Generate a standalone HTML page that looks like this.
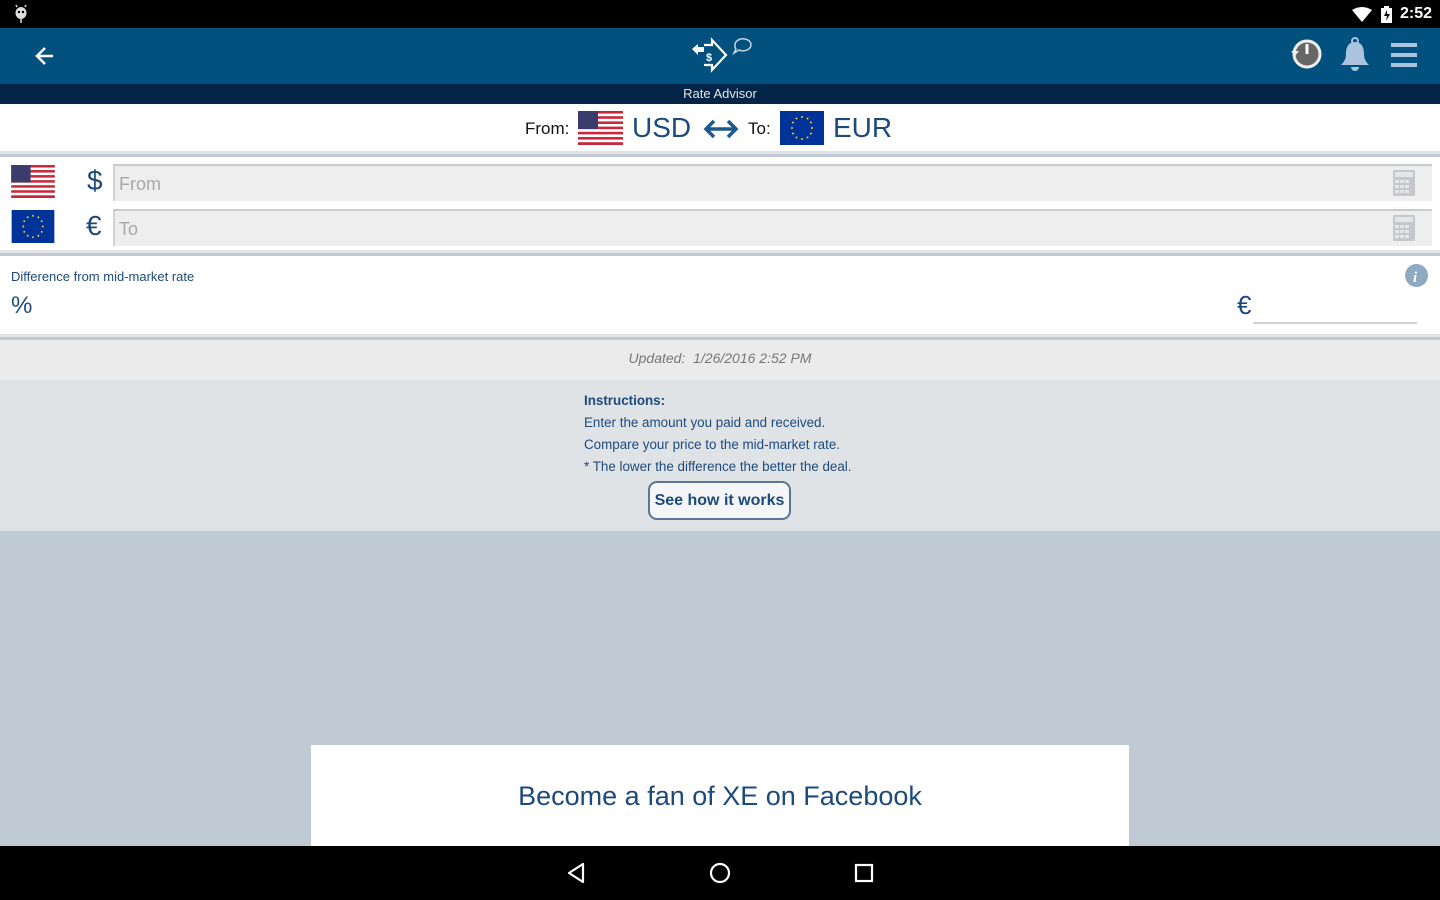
<!DOCTYPE html>
<html><head><meta charset="utf-8"><style>
*{margin:0;padding:0;box-sizing:border-box}
body{width:1440px;height:900px;overflow:hidden;font-family:"Liberation Sans",sans-serif;background:#bfcad5;position:relative}
.a{position:absolute}
.inp{position:absolute;left:113px;width:1319px;height:37px;background:#eeeeee;border-top:2px solid #c9cbcd;border-left:2px solid #d0d2d4;color:#a8a8a8;font-size:18px;padding:8px 0 0 4px}
.inst{position:absolute;left:584px;font-size:13.4px;color:#1d4a7c}
</style></head><body>
<div class="a" style="left:0;top:0;width:1440px;height:28px;background:#000"></div>
<svg class="a" style="left:13px;top:4px" width="16" height="20" viewBox="0 0 16 20"><ellipse cx="8" cy="9" rx="5.5" ry="6" fill="#ddd"/><circle cx="6" cy="8" r="1.2" fill="#000"/><circle cx="10" cy="8" r="1.2" fill="#000"/><path d="M4 3l-1-2M12 3l1-2M8 15v4" stroke="#ddd" stroke-width="1.5"/></svg>
<svg class="a" style="left:1352px;top:7px" width="20" height="15" viewBox="0 0 20 15"><path d="M0 3Q10-3 20 3L10 15Z" fill="#fff"/></svg>
<svg class="a" style="left:1381px;top:6px" width="11" height="17" viewBox="0 0 11 17"><rect x="0" y="2" width="11" height="15" fill="#fff"/><rect x="3" y="0" width="5" height="2" fill="#fff"/><path d="M6 4L3 10h3l-1 5 4-7H6z" fill="#000"/></svg>
<div class="a" style="left:1400px;top:5px;color:#fff;font-size:16px;font-weight:bold">2:52</div>
<div class="a" style="left:0;top:28px;width:1440px;height:56px;background:#02507e"></div>
<svg class="a" style="left:34px;top:45px" width="22" height="22" viewBox="0 0 22 22"><path d="M19 11H4M11 3l-8 8 8 8" stroke="#fff" stroke-width="2.6" fill="none"/></svg>
<svg class="a" style="left:690px;top:32px" width="70" height="42" viewBox="0 0 70 42"><path d="M14 13h8v-5l14 15-14 15v-5h-8" stroke="#fff" stroke-width="2.2" fill="none"/><path d="M2 17l6-5v3h6v5H8v3z" fill="#fff"/><text x="16" y="29" font-size="11" fill="#fff" font-family="Liberation Sans" font-weight="bold">$</text><path d="M45 13a8 6 0 1 1 4 5l-5 3 2-4a8 6 0 0 1-1-4z" stroke="#c8d6e2" stroke-width="1.5" fill="none"/></svg>
<svg class="a" style="left:1289px;top:37px" width="34" height="34" viewBox="0 0 34 34"><circle cx="18" cy="17" r="13" fill="#666" stroke="#eee" stroke-width="3"/><path d="M18 7v10" stroke="#fff" stroke-width="3"/><path d="M2 14l4 5 4-5z" fill="#eee"/></svg>
<svg class="a" style="left:1339px;top:37px" width="32" height="36" viewBox="0 0 32 36"><circle cx="16" cy="4" r="3" fill="none" stroke="#a9c4dc" stroke-width="2"/><path d="M16 5c-7 0-9 6-9 12 0 5-2 8-5 11h28c-3-3-5-6-5-11 0-6-2-12-9-12z" fill="#a9c4dc"/><path d="M12 30a4 4 0 0 0 8 0z" fill="#a9c4dc"/></svg>
<svg class="a" style="left:1391px;top:43px" width="26" height="24" viewBox="0 0 26 24"><rect y="0" width="26" height="4" fill="#a9c4dc"/><rect y="10" width="26" height="4" fill="#a9c4dc"/><rect y="20" width="26" height="4" fill="#a9c4dc"/></svg>
<div class="a" style="left:0;top:84px;width:1440px;height:20px;background:#022547"></div>
<div class="a" style="left:0;top:86px;width:1440px;text-align:center;color:#e6e6e6;font-size:13px">Rate Advisor</div>
<div class="a" style="left:0;top:104px;width:1440px;height:50px;background:#fff;border-bottom:3px solid #e3e3e3"></div>
<div class="a" style="left:525px;top:119px;font-size:17px;color:#111">From:</div>
<svg class="a" style="left:578px;top:111px" width="45" height="34" viewBox="0 0 45 34"><rect width="45" height="34" fill="#fff"/><g fill="#c8283c"><rect y="0" width="45" height="2.6"/><rect y="5.2" width="45" height="2.6"/><rect y="10.4" width="45" height="2.6"/><rect y="15.6" width="45" height="2.6"/><rect y="20.8" width="45" height="2.6"/><rect y="26" width="45" height="2.6"/><rect y="31.2" width="45" height="2.8"/></g><rect width="20" height="18" fill="#3c3b6e"/></svg>
<div class="a" style="left:632px;top:112px;font-size:28px;color:#1d4a7c">USD</div>
<svg class="a" style="left:702px;top:118px" width="38" height="22" viewBox="0 0 38 22"><path d="M5 11h28M12 3l-8 8 8 8M26 3l8 8-8 8" stroke="#1d5a8c" stroke-width="3.5" fill="none"/></svg>
<div class="a" style="left:748px;top:119px;font-size:17px;color:#111">To:</div>
<svg class="a" style="left:780px;top:111px" width="44" height="34" viewBox="0 0 44 34"><rect width="44" height="34" fill="#003399"/><g fill="#fc0"><circle cx="22" cy="6" r="1"/><circle cx="27.5" cy="7.5" r="1"/><circle cx="31" cy="11.5" r="1"/><circle cx="32" cy="17" r="1"/><circle cx="31" cy="22.5" r="1"/><circle cx="27.5" cy="26.5" r="1"/><circle cx="22" cy="28" r="1"/><circle cx="16.5" cy="26.5" r="1"/><circle cx="13" cy="22.5" r="1"/><circle cx="12" cy="17" r="1"/><circle cx="13" cy="11.5" r="1"/><circle cx="16.5" cy="7.5" r="1"/></g></svg>
<div class="a" style="left:833px;top:112px;font-size:28px;color:#1d4a7c">EUR</div>
<div class="a" style="left:0;top:157px;width:1440px;height:96px;background:#fff;border-bottom:3px solid #e3e3e3"></div>
<svg class="a" style="left:11px;top:165px" width="44" height="33" viewBox="0 0 45 34"><rect width="45" height="34" fill="#fff"/><g fill="#c8283c"><rect y="0" width="45" height="2.6"/><rect y="5.2" width="45" height="2.6"/><rect y="10.4" width="45" height="2.6"/><rect y="15.6" width="45" height="2.6"/><rect y="20.8" width="45" height="2.6"/><rect y="26" width="45" height="2.6"/><rect y="31.2" width="45" height="2.8"/></g><rect width="20" height="18" fill="#3c3b6e"/></svg>
<svg class="a" style="left:11px;top:210px" width="44" height="33" viewBox="0 0 44 34"><rect width="44" height="34" fill="#003399"/><g fill="#fc0"><circle cx="22" cy="6" r="1"/><circle cx="27.5" cy="7.5" r="1"/><circle cx="31" cy="11.5" r="1"/><circle cx="32" cy="17" r="1"/><circle cx="31" cy="22.5" r="1"/><circle cx="27.5" cy="26.5" r="1"/><circle cx="22" cy="28" r="1"/><circle cx="16.5" cy="26.5" r="1"/><circle cx="13" cy="22.5" r="1"/><circle cx="12" cy="17" r="1"/><circle cx="13" cy="11.5" r="1"/><circle cx="16.5" cy="7.5" r="1"/></g></svg>
<div class="a" style="left:87px;top:165px;font-size:28px;color:#1d4a7c">$</div>
<div class="a" style="left:86px;top:210px;font-size:28px;color:#1d4a7c">€</div>
<div class="inp" style="top:164px">From</div>
<div class="inp" style="top:209px">To</div>
<svg class="a" style="left:1393px;top:170px" width="22" height="26" viewBox="0 0 22 26"><rect width="22" height="26" fill="#c4c8cc"/><rect x="2" y="2" width="18" height="5" fill="#e4e6e8"/><g fill="#e4e6e8"><rect x="2" y="10" width="4" height="3"/><rect x="7" y="10" width="4" height="3"/><rect x="12" y="10" width="4" height="3"/><rect x="2" y="15" width="4" height="3"/><rect x="7" y="15" width="4" height="3"/><rect x="12" y="15" width="4" height="3"/><rect x="2" y="20" width="4" height="3"/><rect x="7" y="20" width="4" height="3"/><rect x="12" y="20" width="4" height="3"/></g></svg>
<svg class="a" style="left:1393px;top:215px" width="22" height="26" viewBox="0 0 22 26"><rect width="22" height="26" fill="#c4c8cc"/><rect x="2" y="2" width="18" height="5" fill="#e4e6e8"/><g fill="#e4e6e8"><rect x="2" y="10" width="4" height="3"/><rect x="7" y="10" width="4" height="3"/><rect x="12" y="10" width="4" height="3"/><rect x="2" y="15" width="4" height="3"/><rect x="7" y="15" width="4" height="3"/><rect x="12" y="15" width="4" height="3"/><rect x="2" y="20" width="4" height="3"/><rect x="7" y="20" width="4" height="3"/><rect x="12" y="20" width="4" height="3"/></g></svg>
<div class="a" style="left:0;top:256px;width:1440px;height:81px;background:#fff;border-bottom:3px solid #e3e3e3"></div>
<div class="a" style="left:11px;top:269px;font-size:13px;color:#1d4a7c">Difference from mid-market rate</div>
<div class="a" style="left:11px;top:292px;font-size:24px;color:#1d4a7c">%</div>
<svg class="a" style="left:1405px;top:264px" width="23" height="23" viewBox="0 0 23 23"><circle cx="11.5" cy="11.5" r="11.5" fill="#8fa9c0"/><text x="8" y="18" font-size="15" font-style="italic" font-weight="bold" fill="#fff" font-family="Liberation Serif">i</text></svg>
<div class="a" style="left:1237px;top:290px;font-size:26px;color:#1d4a7c">€</div>
<div class="a" style="left:1253px;top:322px;width:164px;height:2px;background:#d2d2d2"></div>
<div class="a" style="left:0;top:340px;width:1440px;height:40px;background:#ebebeb"></div>
<div class="a" style="left:0;top:350px;width:1440px;text-align:center;font-size:14px;font-style:italic;color:#777">Updated:&nbsp; 1/26/2016 2:52 PM</div>
<div class="a" style="left:0;top:380px;width:1440px;height:151px;background:#e0e3e6"></div>
<div class="inst" style="top:393px;font-weight:bold">Instructions:</div>
<div class="inst" style="top:415px">Enter the amount you paid and received.</div>
<div class="inst" style="top:437px">Compare your price to the mid-market rate.</div>
<div class="inst" style="top:459px">* The lower the difference the better the deal.</div>
<div class="a" style="left:648px;top:481px;width:143px;height:39px;border:2px solid #5b7592;border-radius:9px;background:#f4f5f6;color:#1d4a7c;font-size:16px;font-weight:bold;text-align:center;line-height:35px">See how it works</div>
<div class="a" style="left:311px;top:745px;width:818px;height:101px;background:#fff"></div>
<div class="a" style="left:311px;top:781px;width:818px;text-align:center;font-size:27px;color:#1d4a7c">Become a fan of XE on Facebook</div>
<div class="a" style="left:0;top:846px;width:1440px;height:54px;background:#000"></div>
<svg class="a" style="left:566px;top:862px" width="20" height="22" viewBox="0 0 20 22"><path d="M17 2L3 11l14 9z" stroke="#fff" stroke-width="2.2" fill="none" stroke-linejoin="round"/></svg>
<svg class="a" style="left:709px;top:862px" width="22" height="22" viewBox="0 0 22 22"><circle cx="11" cy="11" r="9" stroke="#fff" stroke-width="2.2" fill="none"/></svg>
<svg class="a" style="left:854px;top:863px" width="20" height="20" viewBox="0 0 20 20"><rect x="2" y="2" width="16" height="16" stroke="#fff" stroke-width="2.2" fill="none"/></svg>
</body></html>
